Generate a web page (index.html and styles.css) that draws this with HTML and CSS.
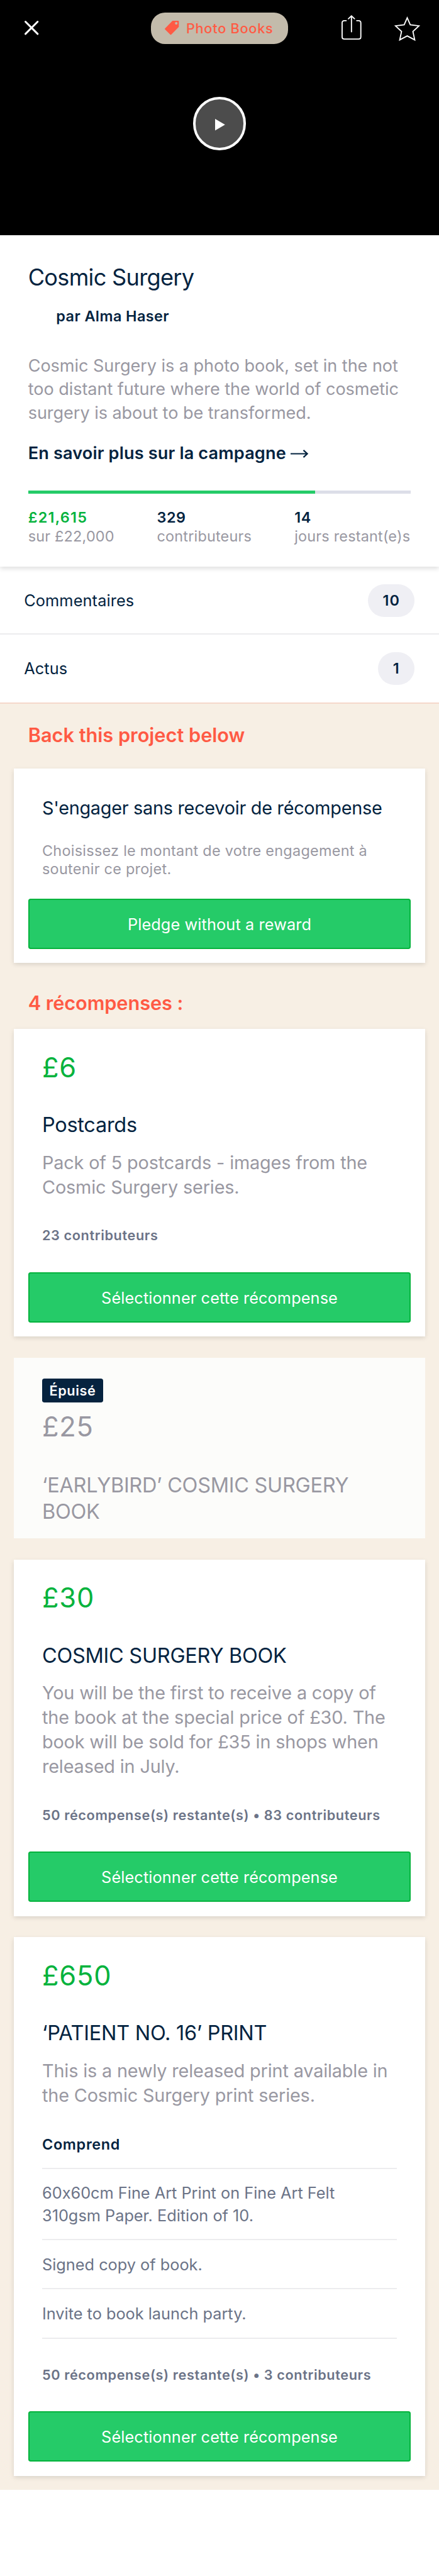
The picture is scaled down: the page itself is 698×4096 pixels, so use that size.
FILE: index.html
```html
<!DOCTYPE html>
<html lang="fr">
<head>
<meta charset="utf-8">
<title>Cosmic Surgery</title>
<link rel="stylesheet" href="styles.css">
</head>
<body>
<header class="hero">
  <nav class="topbar">
    <svg class="icon-close" viewBox="0 0 24 24"><path d="M1.6 1.6 22.4 22.4M22.4 1.6 1.6 22.4"/></svg>
    <span class="category">
      <svg class="icon-tag" viewBox="0 0 24 24"><path fill-rule="evenodd" d="M13.2 0H23Q24 0 24 1V10.6L11 23.6Q10.2 24.4 9.4 23.6L.4 14.8Q-.4 14 .4 13.2ZM19.6 2.2a2.2 2.2 0 1 0 0 4.4 2.2 2.2 0 0 0 0-4.4Z"/></svg>
      <span>Photo Books</span>
    </span>
    <svg class="icon-share" viewBox="0 0 34 42"><path d="M8 9.5H5Q1 9.5 1 13.5V37Q1 41 5 41H29Q33 41 33 37V13.5Q33 9.5 29 9.5H26M17 28.5V1.5M11.8 6.3 17 1.3 22.2 6.3"/></svg>
    <svg class="icon-star" viewBox="0 0 44 42"><path d="M22 2.5 27.2 14.4 42 16.2 31.7 25.8 34.8 40.2 22 33.4 9.2 40.2 12.3 25.8 2 16.2 16.8 14.4Z"/></svg>
  </nav>
  <div class="play"><svg viewBox="0 0 17 20"><path d="M0 0 17 10 0 20Z"/></svg></div>
</header>

<section class="summary">
  <h1 class="title">Cosmic Surgery</h1>
  <p class="author">par Alma Haser</p>
  <p class="blurb">Cosmic Surgery is a photo book, set in the not<br>too distant future where the world of cosmetic<br>surgery is about to be transformed.</p>
  <a class="more"><span>En savoir plus sur la campagne</span><svg class="icon-arrow" viewBox="0 0 30 14"><path d="M0 7H28.4M22 1 28.6 7 22 13"/></svg></a>
  <div class="progress"><div class="progress-fill"></div></div>
  <dl class="stats">
    <div><dt class="pledged">£21,615</dt><dd>sur £22,000</dd></div>
    <div><dt>329</dt><dd>contributeurs</dd></div>
    <div><dt>14</dt><dd>jours restant(e)s</dd></div>
  </dl>
</section>

<div class="row row-first"><span>Commentaires</span><span class="count">10</span></div>
<div class="row row-last"><span>Actus</span><span class="count count-single">1</span></div>

<main class="rewards">
  <h2 class="heading heading-back">Back this project below</h2>
  <article class="card card-plain">
    <h3 class="plain-title">S'engager sans recevoir de récompense</h3>
    <p class="plain-text">Choisissez le montant de votre engagement à<br>soutenir ce projet.</p>
    <div class="button">Pledge without a reward</div>
  </article>

  <h2 class="heading heading-list">4 récompenses :</h2>
  <div class="list">
    <article class="card">
      <p class="price">£6</p>
      <h3 class="name">Postcards</h3>
      <p class="desc">Pack of 5 postcards - images from the<br>Cosmic Surgery series.</p>
      <p class="meta">23 contributeurs</p>
      <div class="button">Sélectionner cette récompense</div>
    </article>

    <article class="card card-gone">
      <span class="badge">Épuisé</span>
      <p class="price">£25</p>
      <h3 class="name">‘EARLYBIRD’ COSMIC SURGERY<br>BOOK</h3>
    </article>

    <article class="card">
      <p class="price">£30</p>
      <h3 class="name">COSMIC SURGERY BOOK</h3>
      <p class="desc">You will be the first to receive a copy of<br>the book at the special price of £30. The<br>book will be sold for £35 in shops when<br>released in July.</p>
      <p class="meta">50 récompense(s) restante(s) • 83 contributeurs</p>
      <div class="button">Sélectionner cette récompense</div>
    </article>

    <article class="card">
      <p class="price">£650</p>
      <h3 class="name">‘PATIENT NO. 16’ PRINT</h3>
      <p class="desc">This is a newly released print available in<br>the Cosmic Surgery print series.</p>
      <h4 class="includes">Comprend</h4>
      <ul class="items">
        <li>60x60cm Fine Art Print on Fine Art Felt<br>310gsm Paper. Edition of 10.</li>
        <li>Signed copy of book.</li>
        <li>Invite to book launch party.</li>
      </ul>
      <p class="meta">50 récompense(s) restante(s) • 3 contributeurs</p>
      <div class="button">Sélectionner cette récompense</div>
    </article>
  </div>
</main>
</body>
</html>
```
FILE: styles.css
```css
/* 1rem is ten design pixels */
html { font-size: 9.3077px; background: #fff; }
* { box-sizing: border-box; margin: 0; padding: 0; font-weight: 400; }
body {
  height: 4096px;
  overflow: hidden;
  color: #03233f;
  font-family: Inter, "Liberation Sans", sans-serif;
  font-feature-settings: "calt" 0;
  white-space: nowrap;
}
svg { display: block; flex: none; overflow: visible; }

/* Hero */
.hero { height: 40.2rem; padding-top: 2.1rem; background: #000; }
.topbar { display: flex; align-items: center; height: 5.4rem; padding-left: 4.2rem; }
.icon-close, .icon-share, .icon-star { fill: none; stroke: #fff; stroke-width: 2; }
.icon-close { width: 2.4rem; height: 2.4rem; stroke-width: 3.2; stroke-linecap: round; }
.category {
  display: flex; align-items: center; gap: 1.2rem;
  width: 23.4rem; height: 5.4rem; margin-left: 19.2rem; padding-left: 2.4rem;
  border-radius: 2.4rem;
  background: #c3bbab; color: #ff5a44;
  font-size: 2.33rem; letter-spacing: .0347em;
}
.category span { font-weight: 500; }
.icon-tag { width: 2.4rem; height: 2.4rem; fill: #ff5a44; }
.icon-share { width: 3.4rem; height: 4.2rem; margin: -.2rem 0 0 9.1rem; stroke-linecap: round; }
.icon-star { width: 4.4rem; height: 4.2rem; margin: .2rem 0 0 5.7rem; }
.play {
  display: flex; align-items: center; justify-content: center;
  width: 9.1rem; height: 9.1rem; margin: 9.1rem auto 0;
  border: 4px solid #fff; border-radius: 50%; background: #4c4c4c;
}
.play svg { width: 1.7rem; height: 2rem; margin: .3rem 0 0 .2rem; fill: #fff; }

/* Summary */
.summary {
  position: relative;
  height: 56.6rem; padding: 4.85rem 4.8rem 0;
  background: #fff; box-shadow: 0 .4rem .8rem rgba(0, 0, 0, .13);
}
.title { font-size: 3.88rem; line-height: 4.8rem; letter-spacing: -.0193em; }
.author { margin: 2.55rem 0 0 4.8rem; font-size: 2.52rem; line-height: 3.2rem; font-weight: 600; letter-spacing: .0166em; }
.blurb { margin-top: 4.9rem; color: #9998a2; font-size: 2.91rem; line-height: 4rem; letter-spacing: -.002em; }
.more { display: flex; align-items: center; gap: .8rem; margin-top: 2.97rem; font-size: 2.91rem; line-height: 4rem; letter-spacing: .0061em; }
.more span { font-weight: 600; }
.icon-arrow { width: 3rem; height: 1.4rem; fill: none; stroke: #03233f; stroke-width: 2.4; }
.progress { height: .6rem; margin-top: 4.3rem; background: #dcdee8; }
.progress-fill { width: 75%; height: 100%; background: #25cb68; }
.stats { display: grid; grid-template-columns: 22rem 23.5rem auto; margin-top: 2.45rem; font-size: 2.52rem; line-height: 3.2rem; }
.stats dt { font-weight: 600; letter-spacing: .025em; }
.stats .pledged { color: #05b33d; letter-spacing: .0536em; }
.stats dd { color: #9998a2; letter-spacing: .008em; }

/* Links with counters */
.row {
  display: flex; align-items: center; justify-content: space-between;
  padding: 0 4.2rem 0 4.1rem;
  font-size: 2.72rem; letter-spacing: .0053em;
}
.row-first { height: 11.6rem; padding-top: .2rem; border-bottom: 2px solid #ececee; }
.row-last { height: 11.8rem; border-bottom: 2px solid #f5d8cb; }
.count {
  width: 7.9rem; height: 5.6rem; border-radius: 2.8rem;
  background: #efeff4; font-size: 2.52rem; line-height: 5.6rem;
  font-weight: 600; text-align: center; letter-spacing: .04em;
}
.count-single { width: 6.2rem; }

/* Rewards */
.rewards { padding: 3.4rem 2.4rem 2.4rem; background: #f7efe4; }
.heading { padding-left: 2.4rem; color: #ff5a44; font-size: 3.3rem; line-height: 4rem; font-weight: 600; }
.heading-back { margin-bottom: 3.7rem; }
.heading-list { margin: 4.8rem 0 2.5rem; letter-spacing: -.0023em; }
.list { display: grid; gap: 3.6rem; }
.card {
  padding: 3.7rem 4.8rem 2.4rem;
  background: #fff; box-shadow: 0 .3rem .8rem rgba(0, 0, 0, .13);
}
.card-plain { padding-top: 4.67rem; }
.plain-title { font-size: 3.1rem; line-height: 4rem; letter-spacing: -.0098em; }
.plain-text { margin-top: 3.87rem; color: #9998a2; font-size: 2.52rem; line-height: 3.1rem; letter-spacing: .0108em; }
.button {
  display: flex; align-items: center; justify-content: center;
  height: 8.6rem; margin: 4.66rem -2.4rem 0; padding-top: .1rem;
  border: 2px solid #05b33d; border-radius: .4rem;
  background: #25cb68; color: #fff; font-size: 2.72rem; letter-spacing: .0042em;
}
.card-plain .button { margin-top: 3.46rem; }
.price { color: #05b33d; font-size: 4.66rem; line-height: 5.6rem; letter-spacing: .0194em; }
.name { margin-top: 4.87rem; font-size: 3.49rem; line-height: 4.6rem; letter-spacing: -.0085em; }
.desc { margin-top: 1.92rem; color: #9998a2; font-size: 3.1rem; line-height: 4.2rem; letter-spacing: -.0058em; }
.meta { margin-top: 4.77rem; color: #6b7387; font-size: 2.33rem; line-height: 3rem; font-weight: 600; letter-spacing: .0281em; }

.card-gone { height: 30.9rem; padding-top: 3.6rem; background: #fcfcfa; box-shadow: none; }
.card-gone .price { margin-top: 1.3rem; color: #9998a2; }
.card-gone .name { margin-top: 4.97rem; color: #9998a2; }
.badge {
  display: block; width: 10.4rem; height: 4.1rem; border-radius: .4rem;
  background: #06233f; color: #fff; font-size: 2.33rem; line-height: 4.1rem;
  font-weight: 600; text-align: center; letter-spacing: .0282em;
}

.includes { margin-top: 4.75rem; padding-bottom: 2.37rem; border-bottom: 2px solid #ececee; font-size: 2.52rem; line-height: 3.2rem; font-weight: 600; letter-spacing: .0279em; }
.items { list-style: none; color: #6b7387; font-size: 2.72rem; line-height: 3.8rem; }
.items li { padding: 2.2rem 0 2.18rem; border-bottom: 2px solid #ececee; }
```
